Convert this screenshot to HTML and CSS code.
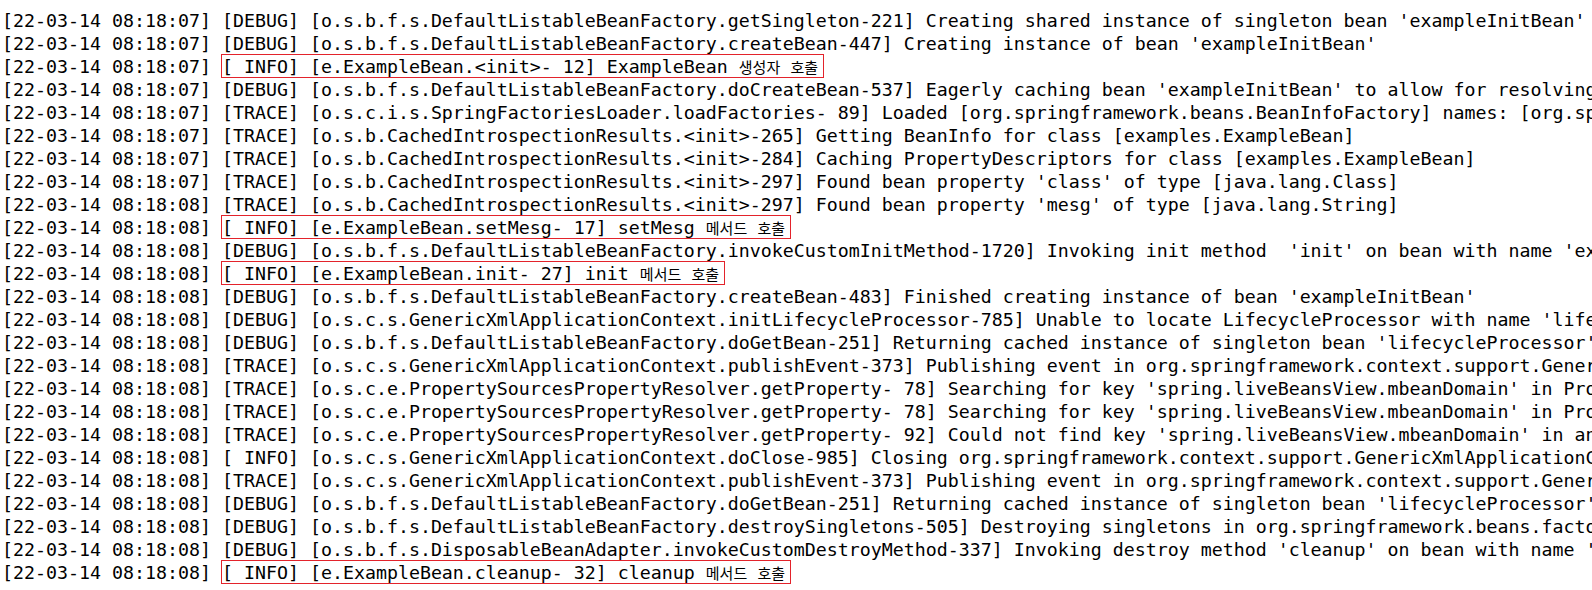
FILE: index.html
```html
<!DOCTYPE html>
<html lang="ko">
<head>
    <meta charset="UTF-8">
    <meta name="viewport" content="width=device-width, initial-scale=1.0">
    <title>console log</title>
    <link rel="stylesheet" href="styles.css">
</head>
<body>
    <div class="log">
        <div class="line">[22-03-14 08:18:07] [DEBUG] [o.s.b.f.s.DefaultListableBeanFactory.getSingleton-221] Creating shared instance of singleton bean 'exampleInitBean'</div>
        <div class="line">[22-03-14 08:18:07] [DEBUG] [o.s.b.f.s.DefaultListableBeanFactory.createBean-447] Creating instance of bean 'exampleInitBean'</div>
        <div class="line">[22-03-14 08:18:07] <span class="mark">[ INFO] [e.ExampleBean.&lt;init&gt;- 12] ExampleBean <span class="ko">생성자 호출</span></span></div>
        <div class="line">[22-03-14 08:18:07] [DEBUG] [o.s.b.f.s.DefaultListableBeanFactory.doCreateBean-537] Eagerly caching bean 'exampleInitBean' to allow for resolving potential circular references</div>
        <div class="line">[22-03-14 08:18:07] [TRACE] [o.s.c.i.s.SpringFactoriesLoader.loadFactories- 89] Loaded [org.springframework.beans.BeanInfoFactory] names: [org.springframework.beans.ExtendedBeanInfoFactory]</div>
        <div class="line">[22-03-14 08:18:07] [TRACE] [o.s.b.CachedIntrospectionResults.&lt;init&gt;-265] Getting BeanInfo for class [examples.ExampleBean]</div>
        <div class="line">[22-03-14 08:18:07] [TRACE] [o.s.b.CachedIntrospectionResults.&lt;init&gt;-284] Caching PropertyDescriptors for class [examples.ExampleBean]</div>
        <div class="line">[22-03-14 08:18:07] [TRACE] [o.s.b.CachedIntrospectionResults.&lt;init&gt;-297] Found bean property 'class' of type [java.lang.Class]</div>
        <div class="line">[22-03-14 08:18:08] [TRACE] [o.s.b.CachedIntrospectionResults.&lt;init&gt;-297] Found bean property 'mesg' of type [java.lang.String]</div>
        <div class="line">[22-03-14 08:18:08] <span class="mark">[ INFO] [e.ExampleBean.setMesg- 17] setMesg <span class="ko">메서드 호출</span></span></div>
        <div class="line">[22-03-14 08:18:08] [DEBUG] [o.s.b.f.s.DefaultListableBeanFactory.invokeCustomInitMethod-1720] Invoking init method  'init' on bean with name 'exampleInitBean'</div>
        <div class="line">[22-03-14 08:18:08] <span class="mark">[ INFO] [e.ExampleBean.init- 27] init <span class="ko">메서드 호출</span></span></div>
        <div class="line">[22-03-14 08:18:08] [DEBUG] [o.s.b.f.s.DefaultListableBeanFactory.createBean-483] Finished creating instance of bean 'exampleInitBean'</div>
        <div class="line">[22-03-14 08:18:08] [DEBUG] [o.s.c.s.GenericXmlApplicationContext.initLifecycleProcessor-785] Unable to locate LifecycleProcessor with name 'lifecycleProcessor': using default [DefaultLifecycleProcessor]</div>
        <div class="line">[22-03-14 08:18:08] [DEBUG] [o.s.b.f.s.DefaultListableBeanFactory.doGetBean-251] Returning cached instance of singleton bean 'lifecycleProcessor'</div>
        <div class="line">[22-03-14 08:18:08] [TRACE] [o.s.c.s.GenericXmlApplicationContext.publishEvent-373] Publishing event in org.springframework.context.support.GenericXmlApplicationContext</div>
        <div class="line">[22-03-14 08:18:08] [TRACE] [o.s.c.e.PropertySourcesPropertyResolver.getProperty- 78] Searching for key 'spring.liveBeansView.mbeanDomain' in PropertySource 'systemProperties'</div>
        <div class="line">[22-03-14 08:18:08] [TRACE] [o.s.c.e.PropertySourcesPropertyResolver.getProperty- 78] Searching for key 'spring.liveBeansView.mbeanDomain' in PropertySource 'systemEnvironment'</div>
        <div class="line">[22-03-14 08:18:08] [TRACE] [o.s.c.e.PropertySourcesPropertyResolver.getProperty- 92] Could not find key 'spring.liveBeansView.mbeanDomain' in any property source</div>
        <div class="line">[22-03-14 08:18:08] [ INFO] [o.s.c.s.GenericXmlApplicationContext.doClose-985] Closing org.springframework.context.support.GenericXmlApplicationContext@1b0375b3</div>
        <div class="line">[22-03-14 08:18:08] [TRACE] [o.s.c.s.GenericXmlApplicationContext.publishEvent-373] Publishing event in org.springframework.context.support.GenericXmlApplicationContext</div>
        <div class="line">[22-03-14 08:18:08] [DEBUG] [o.s.b.f.s.DefaultListableBeanFactory.doGetBean-251] Returning cached instance of singleton bean 'lifecycleProcessor'</div>
        <div class="line">[22-03-14 08:18:08] [DEBUG] [o.s.b.f.s.DefaultListableBeanFactory.destroySingletons-505] Destroying singletons in org.springframework.beans.factory.support.DefaultListableBeanFactory</div>
        <div class="line">[22-03-14 08:18:08] [DEBUG] [o.s.b.f.s.DisposableBeanAdapter.invokeCustomDestroyMethod-337] Invoking destroy method 'cleanup' on bean with name 'exampleInitBean'</div>
        <div class="line">[22-03-14 08:18:08] <span class="mark">[ INFO] [e.ExampleBean.cleanup- 32] cleanup <span class="ko">메서드 호출</span></span></div>
    </div>
</body>
</html>
```

FILE: styles.css
```css
* {
    margin: 0;
    padding: 0;
    box-sizing: border-box;
}

html, body {
    background: #ffffff;
    overflow: hidden;
}

body {
    height: 590px;
}

.log {
    padding: 9px 0 0 2px;
    font-family: "DejaVu Sans Mono", "Noto Sans CJK KR", monospace;
    font-size: 18.27px;
    line-height: 23px;
    color: #000000;
}

.line {
    height: 23px;
    white-space: pre;
}

/* red box around the INFO lines */
.mark {
    outline: 1px solid #e3232b;
    padding: 1px 5px 0 0;
}

.ko {
    font-family: "Noto Sans CJK KR", sans-serif;
    font-size: 15px;
    line-height: 1;
    word-spacing: 6px;
}
```
